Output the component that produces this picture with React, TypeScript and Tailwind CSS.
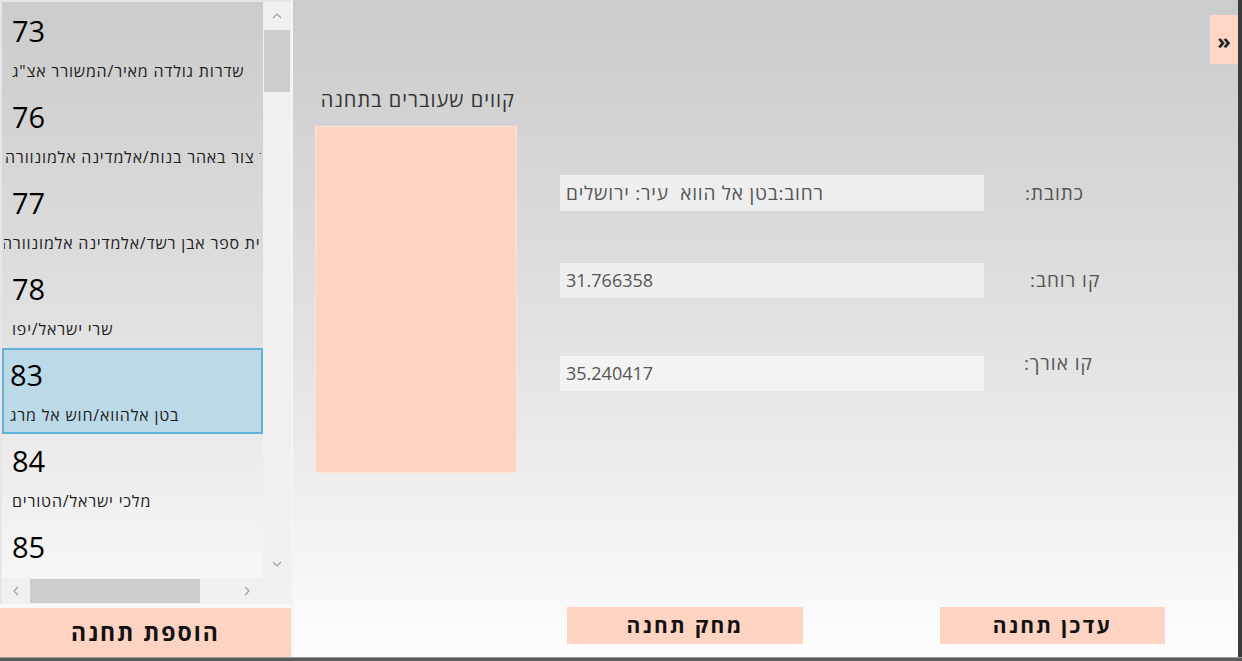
import React from "react";

const items = [
  { n: "73", t: 'שדרות גולדה מאיר/המשורר אצ"ג', off: "" },
  { n: "76", t: "בית ספר צור באהר בנות/אלמדינה אלמונוורה", off: "-ml-[7px]" },
  { n: "77", t: "בית ספר אבן רשד/אלמדינה אלמונוורה", off: "-ml-[10px]" },
  { n: "78", t: "שרי ישראל/יפו", off: "" },
  { n: "83", t: "בטן אלהווא/חוש אל מרג", off: "", sel: true },
  { n: "84", t: "מלכי ישראל/הטורים", off: "" },
  { n: "85", t: "", off: "" },
];

function Chevron({ dir }: { dir: "up" | "down" | "left" | "right" }) {
  const d =
    dir === "up"
      ? "M1 6 L5 2 L9 6"
      : dir === "down"
      ? "M1 2 L5 6 L9 2"
      : dir === "left"
      ? "M6 1 L2 5 L6 9"
      : "M2 1 L6 5 L2 9";
  const w = dir === "up" || dir === "down" ? 10 : 8;
  const h = dir === "up" || dir === "down" ? 8 : 10;
  return (
    <svg width={w} height={h} viewBox={`0 0 ${w} ${h}`}>
      <path d={d} fill="none" stroke="#a0a0a0" strokeWidth="1.2" />
    </svg>
  );
}

export default function App() {
  return (
    <div className="w-[1242px] h-[661px] flex flex-col overflow-hidden font-['Open_Sans','DejaVu_Sans',sans-serif]">
      <div className="flex-1 flex border-r-4 border-[#3b3b3b] bg-gradient-to-b from-[#cbcbcb] via-[#e1e1e1] to-[#fdfdfd] relative">
        {/* Left list panel */}
        <div className="w-[291px] flex flex-col">
          <div className="h-[604px] border-l-2 border-t-2 border-[#e6e6e6] flex flex-col">
            <div className="flex flex-1 min-h-0">
              <div className="w-[261px] overflow-hidden">
                <div className="pt-[2px]">
                  {items.map((it) => (
                    <div
                      key={it.n}
                      className={
                        "h-[86px] overflow-hidden " +
                        (it.sel
                          ? "bg-[#bcd9e8] border-2 border-[#62b1da] pl-[6px]"
                          : "pl-[8px] border-2 border-transparent")
                      }
                    >
                      <div className="text-[29px] font-medium leading-[40px] text-black pt-[5px]">{it.n}</div>
                      <div className={"mt-[8px] whitespace-nowrap " + it.off}>
                        <span dir="rtl" className="inline-block text-[16px] tracking-[0.8px] leading-[22px] text-[#1e1e1e]">
                          {it.t}
                        </span>
                      </div>
                    </div>
                  ))}
                </div>
              </div>
              <div className="w-[28px] flex flex-col bg-[#f0f0f0]">
                <div className="h-[28px] flex items-center justify-center">
                  <Chevron dir="up" />
                </div>
                <div className="h-[62px] bg-[#cdcdcd] mx-[1px]" />
                <div className="flex-1" />
                <div className="h-[28px] flex items-center justify-center">
                  <Chevron dir="down" />
                </div>
              </div>
            </div>
            <div className="h-[26px] flex bg-[#f0f0f0]">
              <div className="w-[28px] flex items-center justify-center">
                <Chevron dir="left" />
              </div>
              <div className="w-[170px] bg-[#cdcdcd] my-[1px]" />
              <div className="flex-1 flex items-center justify-end pr-[12px]">
                <Chevron dir="right" />
              </div>
              <div className="w-[28px]" />
            </div>
          </div>
          <div className="mt-[4px] h-[49px] bg-[#ffd3c1] flex items-center justify-center">
            <span dir="rtl" className="text-[23px] tracking-[2px] font-bold text-[#111]">הוספת תחנה</span>
          </div>
        </div>

        {/* Right area */}
        <div className="flex-1 flex flex-col border-l-2 border-[#f4f4f4]">
          <div className="flex-1 flex">
            <div className="ml-[22px] w-[202px] flex flex-col">
              <div className="mt-[86px] h-[28px] text-right pr-[2px] text-[20px] tracking-[1px] leading-[28px] text-[#333] whitespace-nowrap" dir="rtl">
                קווים שעוברים בתחנה
              </div>
              <div className="mt-[12px] h-[347px] bg-[#ffd3c1] border border-[#fde2d6]" />
            </div>
            <div className="ml-[43px] flex flex-col">
              <div className="mt-[175px] flex items-center">
                <div className="w-[424px] h-[36px] bg-[#eeeeee] flex items-center pl-[6px]">
                  <span dir="rtl" className="text-[19px] tracking-[0.8px] text-[#555] whitespace-pre">רחוב:בטן אל הווא  עיר: ירושלים</span>
                </div>
                <div className="ml-[41px] text-[19px] tracking-[1px] text-[#555]" dir="rtl">כתובת:</div>
              </div>
              <div className="mt-[52px] flex items-center">
                <div className="w-[424px] h-[35px] bg-[#efefef] flex items-center pl-[6px]">
                  <span className="text-[18px] text-[#555]">31.766358</span>
                </div>
                <div className="ml-[46px] text-[19px] tracking-[1px] text-[#555]" dir="rtl">קו רוחב:</div>
              </div>
              <div className="mt-[58px] flex items-start">
                <div className="w-[424px] h-[35px] bg-[#f3f3f3] flex items-center pl-[6px]">
                  <span className="text-[18px] text-[#555]">35.240417</span>
                </div>
                <div className="ml-[40px] -mt-[7px] text-[19px] tracking-[1px] text-[#555]" dir="rtl">קו אורך:</div>
              </div>
            </div>
          </div>
          <div className="h-[37px] mb-[13px] flex">
            <div className="ml-[274px] w-[236px] bg-[#ffd3c1] flex items-center justify-center">
              <span dir="rtl" className="text-[21px] tracking-[2.3px] font-bold text-[#111]">מחק תחנה</span>
            </div>
            <div className="ml-[137px] w-[225px] bg-[#ffd3c1] flex items-center justify-center">
              <span dir="rtl" className="text-[21px] tracking-[2.3px] font-bold text-[#111]">עדכן תחנה</span>
            </div>
          </div>
        </div>

        <div className="absolute right-0 top-[15px] w-[28px] h-[49px] bg-[#ffd6c6] flex items-center justify-center">
          <span className="text-[22px] font-bold text-[#222] leading-none">»</span>
        </div>
      </div>
      <div className="h-[4px] bg-[#5a5a5a] border-t border-[#9a9a9a]" />
    </div>
  );
}
